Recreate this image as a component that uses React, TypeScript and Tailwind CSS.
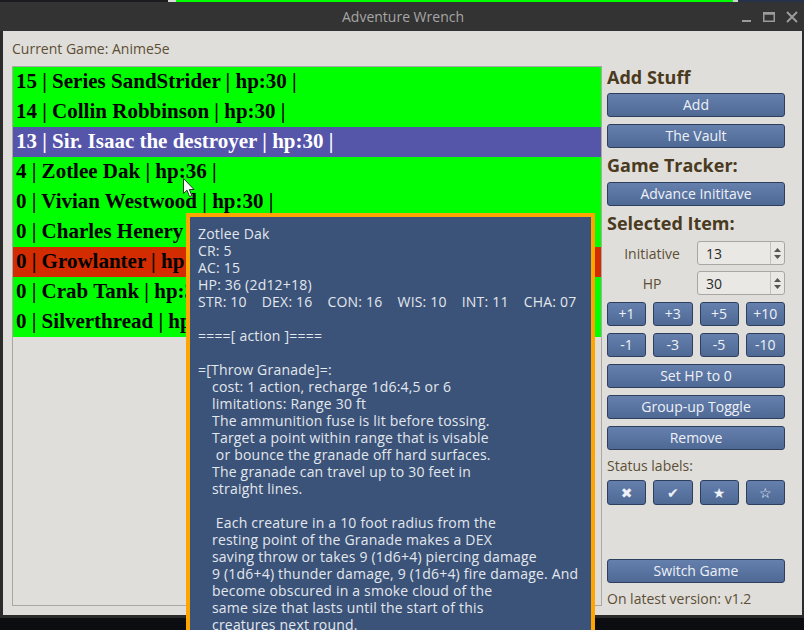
import React from 'react';

const rows = [
  { text: '15 | Series SandStrider | hp:30 |', bg: 'bg-[#00ff00]', fg: 'text-black' },
  { text: '14 | Collin Robbinson | hp:30 |', bg: 'bg-[#00ff00]', fg: 'text-black' },
  { text: '13 | Sir. Isaac the destroyer | hp:30 |', bg: 'bg-[#5555aa]', fg: 'text-white' },
  { text: '4 | Zotlee Dak | hp:36 |', bg: 'bg-[#00ff00]', fg: 'text-black' },
  { text: '0 | Vivian Westwood | hp:30 |', bg: 'bg-[#00ff00]', fg: 'text-black' },
  { text: '0 | Charles Henery | hp:30 |', bg: 'bg-[#00ff00]', fg: 'text-black' },
  { text: '0 | Growlanter | hp:30 |', bg: 'bg-[#d22c00]', fg: 'text-black' },
  { text: '0 | Crab Tank | hp:30 |', bg: 'bg-[#00ff00]', fg: 'text-black' },
  { text: '0 | Silverthread | hp:30 |', bg: 'bg-[#00ff00]', fg: 'text-black' },
];

const tipLines: { t: string; indent?: boolean }[] = [
  { t: 'Zotlee Dak' },
  { t: 'CR: 5' },
  { t: 'AC: 15' },
  { t: 'HP: 36 (2d12+18)' },
  { t: '__STATS__' },
  { t: '' },
  { t: '====[ action ]====' },
  { t: '' },
  { t: '=[Throw Granade]=:' },
  { t: 'cost: 1 action, recharge 1d6:4,5 or 6', indent: true },
  { t: 'limitations: Range 30 ft', indent: true },
  { t: 'The ammunition fuse is lit before tossing.', indent: true },
  { t: 'Target a point within range that is visable', indent: true },
  { t: ' or bounce the granade off hard surfaces.', indent: true },
  { t: 'The granade can travel up to 30 feet in', indent: true },
  { t: 'straight lines.', indent: true },
  { t: '' },
  { t: ' Each creature in a 10 foot radius from the', indent: true },
  { t: 'resting point of the Granade makes a DEX', indent: true },
  { t: 'saving throw or takes 9 (1d6+4) piercing damage', indent: true },
  { t: '9 (1d6+4) thunder damage, 9 (1d6+4) fire damage. And', indent: true },
  { t: 'become obscured in a smoke cloud of the', indent: true },
  { t: 'same size that lasts until the start of this', indent: true },
  { t: 'creatures next round.', indent: true },
];

function Btn({ children, className = '' }: { children: React.ReactNode; className?: string }) {
  return (
    <div
      className={`h-[24px] flex items-center justify-center rounded-[3px] border border-[#2e3f5e] bg-gradient-to-b from-[#6680ae] to-[#4f6995] text-[#eef1f7] text-[14px] leading-none ${className}`}
    >
      {children}
    </div>
  );
}

function Spin({ label, value }: { label: string; value: string }) {
  return (
    <div className="flex items-center h-[24px]">
      <div className="w-[90px] text-center text-[14px] text-[#5e4e34]">{label}</div>
      <div className="flex-1 h-full flex items-center rounded-[3px] border border-[#a9a7a2] bg-[#e9e8e5]">
        <span className="flex-1 pl-[8px] text-[14px] text-[#2a2a2a]">{value}</span>
        <div className="w-[14px] h-full border-l border-[#c4c2be] flex flex-col items-center justify-center gap-[3px]">
          <svg width="7" height="4" viewBox="0 0 7 4"><path d="M0 4 L3.5 0 L7 4 Z" fill="#555" /></svg>
          <svg width="7" height="4" viewBox="0 0 7 4"><path d="M0 0 L3.5 4 L7 0 Z" fill="#555" /></svg>
        </div>
      </div>
    </div>
  );
}

export default function App() {
  return (
    <div className="relative w-[804px] h-[630px] overflow-hidden bg-[#0c0d11] font-['Open_Sans',sans-serif]">
      {/* desktop strip behind window */}
      <div className="flex h-[2px]">
        <div className="w-[168px] bg-[#1c1c20]" />
        <div className="w-[8px] bg-[#d8d8d8]" />
        <div className="w-[557px] bg-[#00ff00]" />
        <div className="w-[5px] bg-[#d0d0d0]" />
        <div className="flex-1 bg-[#25324a]" />
      </div>

      {/* title bar */}
      <div className="h-[29px] bg-[#333333] flex items-center relative">
        <div className="flex-1 text-center text-[14px] text-[#a6a6a6] pl-[2px]">Adventure Wrench</div>
        <div className="absolute right-[6px] top-0 h-full flex items-center gap-[11px]">
          <svg width="10" height="12" viewBox="0 0 10 12"><rect x="0" y="9" width="9" height="2" fill="#9b9b9b" /></svg>
          <svg width="12" height="12" viewBox="0 0 12 12"><rect x="0.75" y="1.75" width="10.5" height="8.5" fill="none" stroke="#9b9b9b" strokeWidth="1.5" /><rect x="0.75" y="1.75" width="10.5" height="2" fill="#9b9b9b" /></svg>
          <svg width="12" height="12" viewBox="0 0 12 12"><path d="M1 1 L11 11 M11 1 L1 11" stroke="#9b9b9b" strokeWidth="2" /></svg>
        </div>
      </div>

      {/* window body */}
      <div className="flex">
        <div className="w-[3px] bg-[#2b2b2b]" />
        <div className="w-[799px] h-[584px] bg-[#dfdedb] px-[9px] flex flex-col">
          <div className="h-[35px] flex items-center text-[14px] text-[#5e4e34]">Current Game: Anime5e</div>
          <div className="flex items-start gap-[5px]">
            {/* list */}
            <div className="w-[590px] h-[540px] border border-[#a9a8a4] bg-[#dfdedb]">
              {rows.map((r) => (
                <div
                  key={r.text}
                  className={`h-[30px] flex items-center pl-[3px] ${r.bg} ${r.fg} font-['Liberation_Serif',serif] font-bold text-[21px] whitespace-pre`}
                >
                  {r.text}
                </div>
              ))}
            </div>

            {/* right panel */}
            <div className="w-[178px] flex flex-col">
              <div className="h-[27px] flex items-center pb-[5px] text-[18px] font-bold text-[#4a3a20]">Add Stuff</div>
              <Btn>Add</Btn>
              <Btn className="mt-[7px]">The Vault</Btn>
              <div className="h-[34px] flex items-center text-[18px] font-bold text-[#4a3a20]">Game Tracker:</div>
              <Btn>Advance Inititave</Btn>
              <div className="h-[35px] flex items-center text-[18px] font-bold text-[#4a3a20]">Selected Item:</div>
              <Spin label="Initiative" value="13" />
              <div className="mt-[6px]">
                <Spin label="HP" value="30" />
              </div>
              <div className="mt-[7px] grid grid-cols-4 gap-x-[7px] gap-y-[7px]">
                {['+1', '+3', '+5', '+10', '-1', '-3', '-5', '-10'].map((b) => (
                  <Btn key={b}>{b}</Btn>
                ))}
              </div>
              <Btn className="mt-[7px]">Set HP to 0</Btn>
              <Btn className="mt-[7px]">Group-up Toggle</Btn>
              <Btn className="mt-[7px]">Remove</Btn>
              <div className="h-[30px] flex items-center text-[14px] text-[#5e4e34]">Status labels:</div>
              <div className="grid grid-cols-4 gap-x-[7px]">
                <Btn className="h-[25px] font-['DejaVu_Sans',sans-serif] text-[13px]">✖</Btn>
                <Btn className="h-[25px] font-['DejaVu_Sans',sans-serif] text-[13px]">✔</Btn>
                <Btn className="h-[25px] font-['DejaVu_Sans',sans-serif] text-[13px]">★</Btn>
                <Btn className="h-[25px] font-['DejaVu_Sans',sans-serif] text-[13px] text-[#aab7d0]">☆</Btn>
              </div>
              <Btn className="mt-[54px]">Switch Game</Btn>
              <div className="h-[30px] flex items-center text-[14px] text-[#5e4e34]">On latest version: v1.2</div>
            </div>
          </div>
        </div>
        <div className="w-[2px] bg-[#2b2b2b]" />
      </div>
      <div className="h-[3px] bg-[#2a2a2a] w-[804px]" />

      {/* hover tooltip */}
      <div className="absolute left-[186px] top-[213px] w-[409px] h-[440px] border-[4px] border-[#ffa500] bg-[#3b5378] px-[8px] pt-[8px] text-[14px] leading-[17px] tracking-[0.2px] text-[#e3e7ee]">
        {tipLines.map((l, i) =>
          l.t === '__STATS__' ? (
            <div key={i} className="h-[17px] flex gap-[15px] whitespace-pre">
              <span>STR: 10</span>
              <span>DEX: 16</span>
              <span>CON: 16</span>
              <span>WIS: 10</span>
              <span>INT: 11</span>
              <span>CHA: 07</span>
            </div>
          ) : (
            <div key={i} className={`h-[17px] whitespace-pre ${l.indent ? 'pl-[14px]' : ''}`}>
              {l.t}
            </div>
          )
        )}
      </div>

      {/* mouse pointer */}
      <svg className="absolute left-[183px] top-[178px]" width="13" height="20" viewBox="0 0 13 20">
        <path d="M0.5 0.5 L0.5 15.5 L4 12.2 L6.5 18.5 L8.8 17.5 L6.3 11.5 L11 11.5 Z" fill="#ffffff" stroke="#333" strokeWidth="1" />
      </svg>
    </div>
  );
}
